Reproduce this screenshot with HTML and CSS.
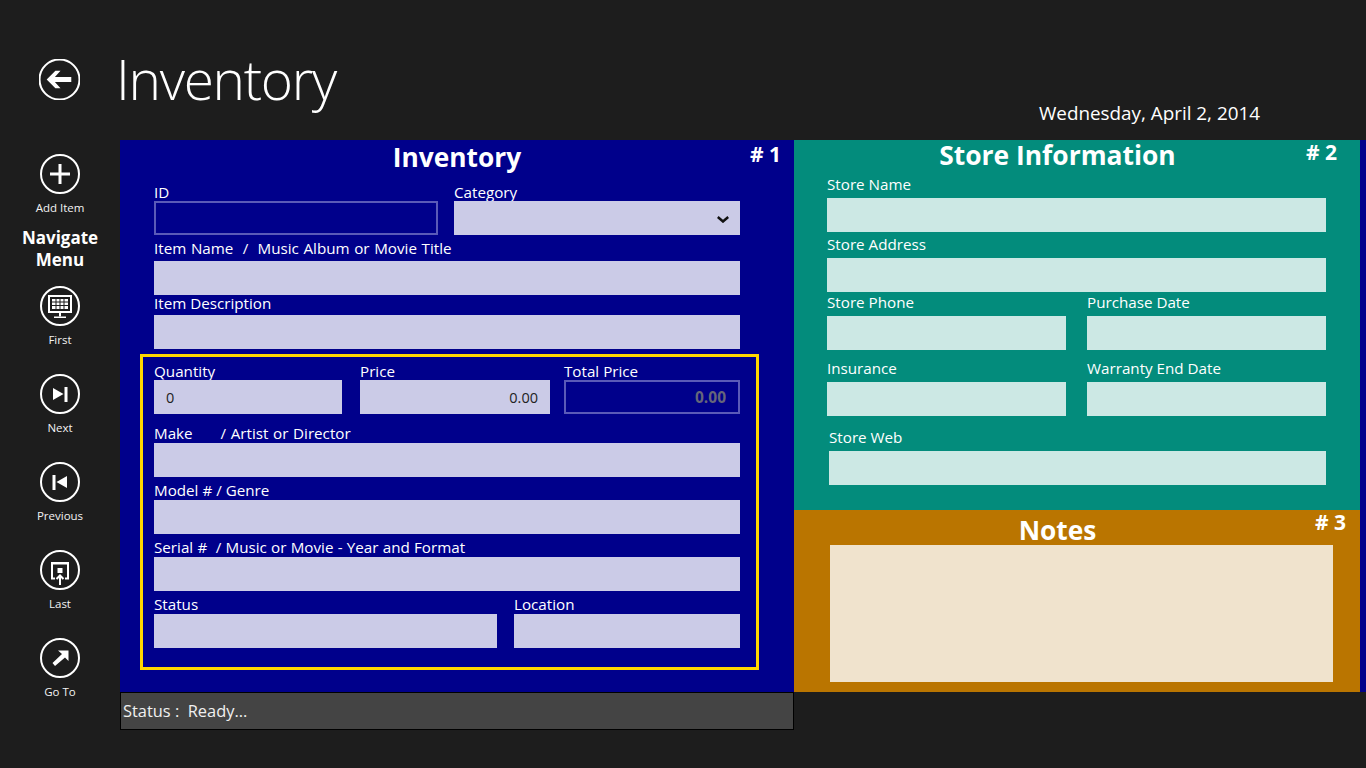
FILE: index.html
```html
<!DOCTYPE html>
<html lang="en">
<head>
<meta charset="utf-8">
<title>Inventory</title>
<link rel="stylesheet" href="styles.css">
</head>
<body>
<header class="top">
  <button class="circle back" aria-label="Back">
    <svg viewBox="0 0 40 40" class="ico"><circle cx="20" cy="20" r="19.5" class="ring"/><polygon class="solid" points="7.500,20 16,11.500 21,11.500 15.500,17.500 31.500,17.500 31.500,22.500 15.500,22.500 21,28.500 16,28.500"/></svg>
  </button>
  <h1 class="page-title">Inventory</h1>
  <div class="date">Wednesday, April 2, 2014</div>
</header>
<div class="main">
  <nav class="side">
    <a class="nav-item">
      <svg viewBox="0 0 40 40" class="ico"><circle cx="20" cy="20" r="19" class="ring"/><rect class="solid" x="10" y="18.5" width="20" height="3"/><rect class="solid" x="18.5" y="10" width="3" height="20"/></svg>
      <span>Add Item</span>
    </a>
    <div class="nav-head">Navigate<br>Menu</div>
    <a class="nav-item">
      <svg viewBox="0 0 40 40" class="ico"><circle cx="20" cy="20" r="19" class="ring"/><rect x="9" y="10" width="22" height="16" class="line"/><g class="solid"><rect x="12" y="13" width="3.5" height="2.5"/><rect x="16.5" y="13" width="3" height="2.5"/><rect x="20.5" y="13" width="3" height="2.5"/><rect x="24.5" y="13" width="3.5" height="2.5"/><rect x="12" y="16.5" width="3.5" height="2.5"/><rect x="16.5" y="16.5" width="3" height="2.5"/><rect x="20.5" y="16.5" width="3" height="2.5"/><rect x="24.5" y="16.5" width="3.5" height="2.5"/><rect x="12" y="20" width="3.5" height="3"/><rect x="16.5" y="20" width="3" height="3"/><rect x="20.5" y="20" width="3" height="3"/><rect x="24.5" y="20" width="3.5" height="3"/><rect x="19" y="27" width="2" height="3.5"/><rect x="14" y="30.5" width="12" height="1.5"/></g></svg>
      <span>First</span>
    </a>
    <a class="nav-item">
      <svg viewBox="0 0 40 40" class="ico"><circle cx="20" cy="20" r="19" class="ring"/><polygon class="solid" points="13,14 23.5,20 13,26"/><rect class="solid" x="24.5" y="13" width="3" height="15"/></svg>
      <span>Next</span>
    </a>
    <a class="nav-item">
      <svg viewBox="0 0 40 40" class="ico"><circle cx="20" cy="20" r="19" class="ring"/><polygon class="solid" points="27,14 16.5,20 27,26"/><rect class="solid" x="12.5" y="13" width="3" height="15"/></svg>
      <span>Previous</span>
    </a>
    <a class="nav-item">
      <svg viewBox="0 0 40 40" class="ico"><circle cx="20" cy="20" r="19" class="ring"/><rect class="solid" x="11" y="12" width="18" height="2.5"/><path class="line" d="M12 14v14.500h3M28 14v14.500h-3"/><rect class="solid" x="17.500" y="18" width="5" height="5"/><path class="line" d="M20 35V25.500M16.500 29l3.500-3.500 3.500 3.500"/></svg>
      <span>Last</span>
    </a>
    <a class="nav-item">
      <svg viewBox="0 0 40 40" class="ico"><circle cx="20" cy="20" r="19" class="ring"/><polygon class="solid" points="18,12.500 28.500,12.500 28.500,23 25,19.500 15,28 12.500,25 22,16"/></svg>
      <span>Go To</span>
    </a>
  </nav>
  <div class="content">
    <div class="board">
      <section class="inv">
        <h2 class="inv-title">Inventory</h2>
        <span class="tag tag-1"># 1</span>
        <div class="inv-upper">
          <div class="row">
            <div class="field w-id"><label class="lb-tight">ID</label><input class="box box-ro" type="text"></div>
            <div class="field w-cat"><label class="lb-tight">Category</label>
              <div class="select-wrap"><select class="box box-inv"><option></option></select>
                <svg class="chev" viewBox="0 0 12 7"><path d="M.8 1l5.200 4.500L11.200 1"/></svg>
              </div>
            </div>
          </div>
          <div class="field mt-3"><label class="lb-3 lb-wide">Item Name &nbsp;/ &nbsp;Music Album or Movie Title</label><input class="box box-inv" type="text"></div>
          <div class="field mt-n2"><label class="lb-2">Item Description</label><input class="box box-inv" type="text"></div>
        </div>
        <div class="gold">
          <div class="row">
            <div class="field w-qty"><label class="lb-tight">Quantity</label><input class="box box-inv num-left" type="text" value="0"></div>
            <div class="field w-price"><label class="lb-tight">Price</label><input class="box box-inv num-right" type="text" value="0.00"></div>
            <div class="field w-total"><label class="lb-tight">Total Price</label><input class="box box-ro num-right total" type="text" value="0.00"></div>
          </div>
          <div class="field mt-9"><label class="lb-wide">Make &nbsp; &nbsp; &nbsp;/ Artist or Director</label><input class="box box-inv" type="text"></div>
          <div class="field mt-3"><label>Model # / Genre</label><input class="box box-inv" type="text"></div>
          <div class="field mt-3"><label class="lb-wide-s">Serial # &nbsp;/ Music or Movie - Year and Format</label><input class="box box-inv" type="text"></div>
          <div class="row mt-3">
            <div class="field w-status"><label>Status</label><input class="box box-inv" type="text"></div>
            <div class="field w-loc"><label>Location</label><input class="box box-inv" type="text"></div>
          </div>
        </div>
      </section>
      <div class="right">
        <section class="store">
          <h2 class="store-title">Store Information</h2>
          <span class="tag tag-2"># 2</span>
          <div class="field mt-4"><label class="lb-4">Store Name</label><input class="box box-store" type="text"></div>
          <div class="field mt-2"><label class="lb-4">Store Address</label><input class="box box-store" type="text"></div>
          <div class="store-grid">
            <div class="field"><label class="lb-4">Store Phone</label><input class="box box-store" type="text"></div>
            <div class="field"><label class="lb-4">Purchase Date</label><input class="box box-store" type="text"></div>
            <div class="field"><label class="lb-4">Insurance</label><input class="box box-store" type="text"></div>
            <div class="field"><label class="lb-4">Warranty End Date</label><input class="box box-store" type="text"></div>
          </div>
          <div class="field web"><label class="lb-4">Store Web</label><input class="box box-store" type="text"></div>
        </section>
        <section class="notes">
          <h2 class="notes-title">Notes</h2>
          <span class="tag tag-3"># 3</span>
          <textarea class="notes-area"></textarea>
        </section>
      </div>
    </div>
    <div class="status">Status : &nbsp;Ready...</div>
  </div>
</div>
</body>
</html>
```
FILE: styles.css
```css
* { box-sizing: border-box; }
html, body { margin: 0; height: 768px; overflow: hidden; }
body { background: #1d1d1d; color: #fff; font-family: "Open Sans", "Noto Sans", sans-serif; width: 1366px; }
h1, h2 { margin: 0; }
.top { height: 140px; display: flex; position: relative; }
.back { width: 41px; height: 41px; margin: 59px 0 0 39px; padding: 0; border: 0; background: none; }
.ico { display: block; width: 40px; height: 40px; }
.back .ico { width: 41px; height: 41px; }
.ring { fill: none; stroke: #fff; stroke-width: 2; }
.solid { fill: #fff; }
.line { fill: none; stroke: #fff; stroke-width: 2; }
.page-title { font-size: 55px; font-weight: 300; line-height: 70px; margin: 44px 0 0 36px; letter-spacing: -1.3px; }
.date { margin: 101px 0 0 auto; padding-right: 106px; font-size: 18.850px; line-height: 25px; }
.main { display: flex; height: 628px; }
.side { width: 120px; display: flex; flex-direction: column; align-items: center; padding-top: 14px; }
.nav-item { display: flex; flex-direction: column; align-items: center; height: 88px; }
.nav-item span { font-size: 11.500px; line-height: 16px; margin-top: 6px; color: #f2f2f2; }
.nav-head { font-size: 17px; font-weight: 700; line-height: 22px; text-align: center; margin: -15px 0 15px; height: 44px; }
.content { width: 1246px; }
.board { display: flex; background: #00008b; height: 552px; }
.inv { width: 674px; padding-left: 20px; position: relative; }
.inv-title { font-size: 26.300px; font-weight: 700; line-height: 35px; height: 36px; margin: 0 0 6px 0; padding-right: 20px; text-align: center; }
.tag { position: absolute; font-size: 21px; font-weight: 700; line-height: 28px; }
.tag-1 { right: 13px; top: 0; }
.tag-2 { right: 23px; top: -2px; }
.tag-3 { right: 14px; top: -2px; }
.inv-upper { margin-left: 14px; width: 586px; }
.row { display: flex; }
.field { display: flex; flex-direction: column; }
.field label { font-size: 15.200px; line-height: 20px; height: 20px; white-space: nowrap; }
.field .lb-tight { margin-bottom: -1px; }
.field .lb-2 { margin-bottom: 2px; }
.field .lb-3 { margin-bottom: 3px; }
.field .lb-4 { margin-bottom: 4px; }
.field .lb-wide { word-spacing: .7px; }
.field .lb-wide-s { word-spacing: .3px; }
.box { display: block; width: 100%; height: 34px; border: 0; border-radius: 0; margin: 0; font-family: inherit; font-size: 14.500px; color: #222; outline: 0; padding: 0 12px; appearance: none; }
.box-inv { background: #cbcbe7; }
.box-ro { background: #00008b; border: 2px solid #5a5ab8; }
.box-store { background: #cce8e4; }
.num-left { text-align: left; }
.num-right { text-align: right; }
.total { color: #66667a; font-weight: 700; font-size: 15.500px; }
.w-id { width: 284px; margin-right: 16px; }
.w-cat { width: 286px; }
.select-wrap { position: relative; }
.chev { position: absolute; right: 11px; top: 15px; width: 12px; height: 7px; }
.chev path { fill: none; stroke: #111; stroke-width: 2.500; }
.mt-2 { margin-top: 2px; }
.mt-3 { margin-top: 3px; }
.mt-4 { margin-top: 4px; }
.mt-9 { margin-top: 9px; }
.mt-n2 { margin-top: -2px; }
.gold { width: 619px; height: 316px; margin-top: 5px; border: 3px solid #ffd700; padding: 4px 16px 0 11px; }
.w-qty { width: 188px; margin-right: 18px; }
.w-price { width: 190px; margin-right: 14px; }
.w-total { width: 176px; }
.w-status { width: 343px; margin-right: 17px; }
.w-loc { width: 226px; }
.right { width: 566px; }
.store { height: 370px; background: #038c7c; padding: 0 34px 0 33px; position: relative; }
.store-title { font-size: 26.400px; font-weight: 700; line-height: 30px; height: 30px; text-align: center; margin-right: 38px; }
.store-grid { display: grid; grid-template-columns: 239px 239px; column-gap: 21px; row-gap: 8px; }
.web { margin: 11px 0 0 2px; }
.notes { height: 182px; background: #ba7500; position: relative; padding: 0 27px 0 36px; }
.notes-title { font-size: 26.300px; font-weight: 700; line-height: 40px; height: 35px; text-align: center; margin: 0 12px 0 -36px; }
.notes-area { display: block; width: 503px; height: 137px; border: 0; background: #f0e3cd; resize: none; outline: 0; }
.status { width: 674px; height: 38px; background: #444; border: 1px solid #000; font-size: 16.400px; line-height: 36px; padding-left: 2px; color: #f0f0f0; }
```
